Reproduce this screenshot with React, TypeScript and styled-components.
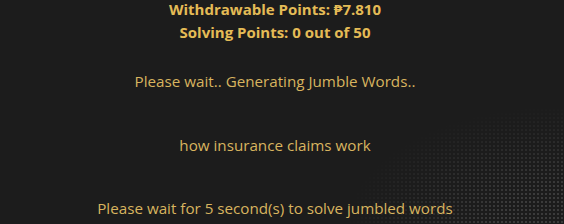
import React from "react";
import {createGlobalStyle, styled} from "styled-components";

const GlobalStyle = createGlobalStyle`
  html, body {
    margin: 0;
    padding: 0;
    background-color: #1c1c1c;
  }
  #root {
    height: 224px;
  }
`

const Page = styled.main`
  position: relative;
  height: 224px;
  overflow: hidden;
  padding-right: 14px;
  box-sizing: border-box;
  background-color: #1c1c1c;
  font-family: "Open Sans", "Noto Sans", sans-serif;
  display: flex;
  flex-direction: column;
  align-items: center;
`

const DotField = styled.div`
  position: absolute;
  right: 0;
  bottom: 0;
  width: 220px;
  height: 120px;
  background-image: radial-gradient(circle, rgba(255, 255, 255, 0.14) 0.7px, transparent 1.1px);
  background-size: 4px 4px;
  -webkit-mask-image: radial-gradient(ellipse 100% 100% at 100% 100%, #000 30%, rgba(0,0,0,0.45) 70%, transparent 100%);
  mask-image: radial-gradient(ellipse 100% 100% at 100% 100%, #000 30%, rgba(0,0,0,0.45) 70%, transparent 100%);
  pointer-events: none;
`

const Stats = styled.section`
  display: flex;
  flex-direction: column;
  align-items: center;
  gap: 4px;
`

const StatLine = styled.div`
  font-weight: 700;
  font-size: 15px;
  line-height: 19px;
  color: #e4bb56;
`

const Message = styled.p<{ $gap: number }>`
  position: relative;
  margin: ${p => p.$gap}px 0 0 0;
  font-size: 15.2px;
  line-height: 20px;
  color: #d8b45f;
  text-align: center;
`

const App = () => {
    return (
        <>
            <GlobalStyle/>
            <Page>
                <DotField/>
                <Stats>
                    <StatLine>Withdrawable Points: ₱7.810</StatLine>
                    <StatLine>Solving Points: 0 out of 50</StatLine>
                </Stats>
                <Message $gap={29}>Please wait.. Generating Jumble Words..</Message>
                <Message $gap={44}>how insurance claims work</Message>
                <Message $gap={43}>Please wait for 5 second(s) to solve jumbled words</Message>
            </Page>
        </>
    );
}

export default App;
